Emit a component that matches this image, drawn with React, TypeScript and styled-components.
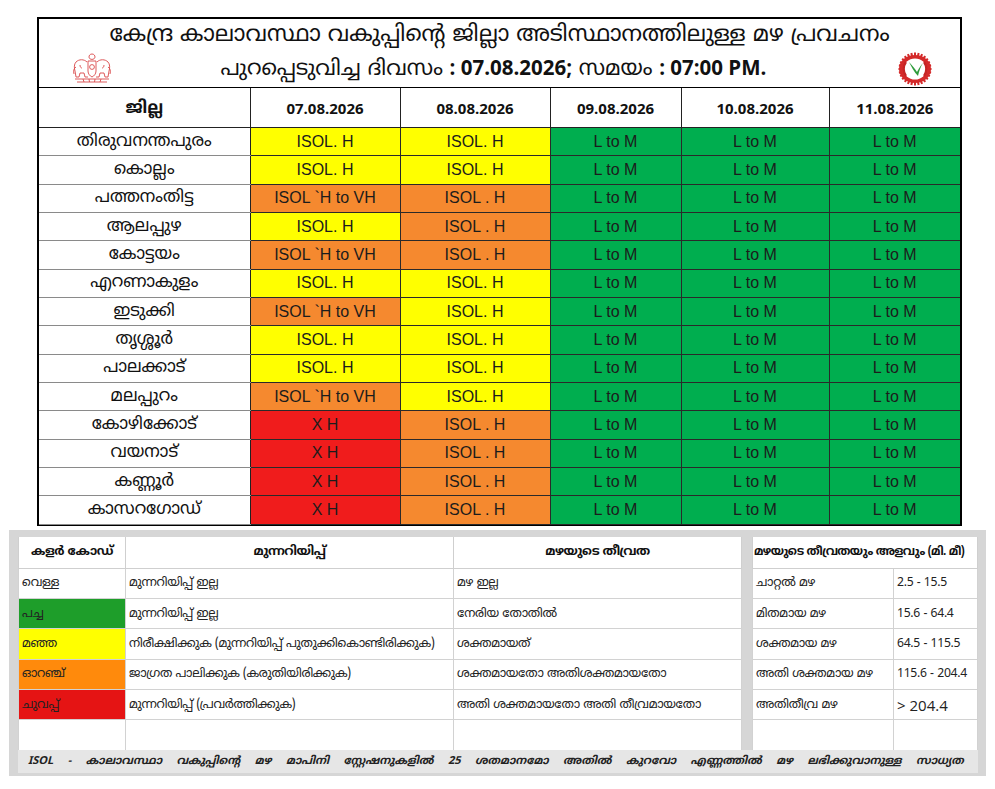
import React from "react";
import styled, { createGlobalStyle } from "styled-components";

const Global = createGlobalStyle`
  html, body { margin: 0; padding: 0; background: #fff; }
  body { font-family: "Noto Sans Malayalam", "Noto Sans", "Liberation Sans", sans-serif; color: #111; }
`;

const ML = `"Noto Sans Malayalam", "Noto Sans", "Liberation Sans", sans-serif`;

const Page = styled.div`
  width: 995px;
  padding-top: 17px;
`;

const Forecast = styled.div`
  margin-left: 37px;
  width: 925px;
  box-sizing: border-box;
  border: 2px solid #000;
  border-bottom-width: 1px;
`;

const TitleBox = styled.div`
  height: 69px;
  box-sizing: border-box;
  border-bottom: 1px solid #000;
  display: grid;
  grid-template-columns: 110px 1fr 110px;
  grid-template-rows: 33px 36px;
  grid-template-areas: "t t t" "l s r";
`;

const TitleLine = styled.div`
  grid-area: t;
  text-align: center;
  font-family: ${ML};
  font-size: 22.5px;
  line-height: 33px;
  padding-top: 1px;
  color: #111;
  white-space: nowrap;
`;

const SubLine = styled.div`
  grid-area: s;
  text-align: center;
  font-family: ${ML};
  font-size: 21.5px;
  line-height: 30px;
  color: #111;
  margin-left: -12px;
  white-space: nowrap;
  b { font-family: "Open Sans", "Liberation Sans", sans-serif; font-weight: 700; font-size: 20.5px; }
`;

const LogoSlot = styled.div<{ $side: "l" | "r" }>`
  grid-area: ${(p) => p.$side};
  display: flex;
  align-items: flex-start;
  justify-content: ${(p) => (p.$side === "l" ? "flex-start" : "flex-end")};
  padding: ${(p) => (p.$side === "l" ? "0 0 0 30px" : "0 24px 0 0")};
`;

const Table = styled.table`
  width: 100%;
  border-collapse: collapse;
  table-layout: fixed;
`;

const HeadCell = styled.th`
  height: 39px;
  padding: 0;
  border: 1px solid #222;
  border-top: none;
  font-family: "Open Sans", ${ML};
  font-weight: 700;
  font-size: 15px;
  color: #111;
  &:first-child { border-left: none; font-size: 17px; }
  &:last-child { border-right: none; }
`;

const colors: Record<string, string> = {
  Y: "#ffff00",
  O: "#f5892f",
  R: "#f01c1c",
  G: "#00ae4f",
};

const NameCell = styled.td`
  height: 28.35px;
  padding: 0;
  box-sizing: border-box;
  text-align: center;
  font-family: ${ML};
  font-size: 17px;
  line-height: 20px;
  border: 1px solid #8a8a8a;
  border-left: none;
  border-right-color: #222;
  background: #fff;
  white-space: nowrap;
`;

const ValueCell = styled.td<{ $c: string }>`
  height: 28.35px;
  padding: 0;
  box-sizing: border-box;
  text-align: center;
  font-family: "Liberation Sans", Arial, sans-serif;
  font-size: 16px;
  color: #1c1c1c;
  background: ${(p) => colors[p.$c]};
  border: 1px solid #2a2a2a;
  &:last-child { border-right: none; }
`;

const Legend = styled.div`
  margin: 4px 0 0 9px;
  width: 977px;
  height: 246px;
  box-sizing: border-box;
  background: #d6d6d6;
  padding: 7px 8px 3px 9px;
  display: grid;
  grid-template-columns: 724px 226px;
  grid-template-rows: 213px 23px;
  column-gap: 10px;
`;

const LegendTable = styled.table`
  width: 100%;
  border-collapse: collapse;
  table-layout: fixed;
  background: #fff;
`;

const LHead = styled.th<{ $align?: string }>`
  height: 31px;
  padding: 0 ${(p) => (p.$align ? "1px" : "3px")};
  font-family: ${ML};
  font-size: ${(p) => (p.$align ? "11.6px" : "12.5px")};
  letter-spacing: ${(p) => (p.$align ? "-0.6px" : "-0.5px")};
  font-weight: 700;
  text-align: ${(p) => p.$align || "center"};
  color: #111;
  border: 1px solid #cfcfcf;
  border-top: none;
  white-space: nowrap;
`;

const LCell = styled.td<{ $bg?: string; $big?: boolean }>`
  height: 30.3px;
  padding: 0 3px;
  box-sizing: border-box;
  font-family: ${(p) => (p.$big ? `"Open Sans", sans-serif` : ML)};
  font-size: ${(p) => (p.$big ? "15px" : "12.2px")};
  letter-spacing: ${(p) => (p.$big ? "0" : "-0.3px")};
  color: #222;
  background: ${(p) => p.$bg || "#fff"};
  border: 1px solid #d2d2d2;
  white-space: nowrap;
  overflow: hidden;
`;

const Footer = styled.div`
  grid-column: 1 / span 2;
  background: #e6e6e6;
  font-family: ${ML};
  font-style: italic;
  font-weight: 700;
  font-size: 11px;
  line-height: 23px;
  color: #222;
  padding-left: 10px;
  word-spacing: 11px;
  white-space: nowrap;
  overflow: hidden;
`;

const KeralaEmblem = () => (
  <svg width="46" height="32" viewBox="0 0 46 32" fill="none" stroke="#d9484a" strokeWidth="0.9">
    <path d="M23 2c-2 0-3 1.5-3 3s1.4 2.4 3 2.4 3-1 3-2.4-1-3-3-3z" />
    <path d="M19 9h8v10c0 3-2 5-4 6-2-1-4-3-4-6z" />
    <circle cx="23" cy="15" r="2.4" />
    <path d="M18 10c-3-3-8-3-11 0-2 2-2 6-1 9l1 6h3l1-4h4l1 4h3" />
    <path d="M7 15c-2 1-3 4-2 7M11 13c0 2 1 3 2 3" />
    <path d="M28 10c3-3 8-3 11 0 2 2 2 6 1 9l-1 6h-3l-1-4h-4l-1 4h-3" />
    <path d="M39 15c2 1 3 4 2 7M35 13c0 2-1 3-2 3" />
    <path d="M6 27h34M8 30h30" />
    <path d="M14 27l1 3M20 27l0.5 3M26 27l-0.5 3M32 27l-1 3" />
  </svg>
);

const ImdLogo = () => {
  const teeth = Array.from({ length: 28 }, (_, i) => (i * 360) / 28);
  return (
    <svg width="42" height="34" viewBox="0 0 42 34">
      {teeth.map((a) => (
        <rect key={a} x="20" y="0.5" width="2" height="4" fill="#d42a2a" transform={`rotate(${a} 21 17)`} />
      ))}
      <ellipse cx="21" cy="17" rx="16" ry="14" fill="#d42a2a" />
      <ellipse cx="21" cy="17" rx="11.5" ry="10.5" fill="#fff" />
      <path d="M12 10c-3 4-3 10 0 14" stroke="#c52525" strokeWidth="2.2" fill="none" />
      <path d="M30 10c3 4 3 10 0 14" stroke="#c52525" strokeWidth="2.2" fill="none" />
      <path d="M15 10c2 4 5 10 9 14 1-5 3-10 5-13-3 3-5 7-6 9-2-3-5-7-8-10z" fill="#2e9b3b" />
    </svg>
  );
};

type Row = { name: string; d1: [string, string]; d2: [string, string] };
const H: [string, string] = ["Y", "ISOL. H"];
const OVH: [string, string] = ["O", "ISOL `H to VH"];
const OH: [string, string] = ["O", "ISOL . H"];
const RX: [string, string] = ["R", "X H"];

const rows: Row[] = [
  { name: "തിരുവനന്തപുരം", d1: H, d2: H },
  { name: "കൊല്ലം", d1: H, d2: H },
  { name: "പത്തനംതിട്ട", d1: OVH, d2: OH },
  { name: "ആലപ്പുഴ", d1: H, d2: OH },
  { name: "കോട്ടയം", d1: OVH, d2: OH },
  { name: "എറണാകുളം", d1: H, d2: H },
  { name: "ഇടുക്കി", d1: OVH, d2: H },
  { name: "തൃശ്ശൂർ", d1: H, d2: H },
  { name: "പാലക്കാട്", d1: H, d2: H },
  { name: "മലപ്പുറം", d1: OVH, d2: H },
  { name: "കോഴിക്കോട്", d1: RX, d2: OH },
  { name: "വയനാട്", d1: RX, d2: OH },
  { name: "കണ്ണൂർ", d1: RX, d2: OH },
  { name: "കാസറഗോഡ്", d1: RX, d2: OH },
];

const dates = ["07.08.2026", "08.08.2026", "09.08.2026", "10.08.2026", "11.08.2026"];

const legendRows = [
  ["വെള്ള", "#ffffff", "മുന്നറിയിപ്പ് ഇല്ല", "മഴ ഇല്ല"],
  ["പച്ച", "#1e9e2a", "മുന്നറിയിപ്പ് ഇല്ല", "നേരിയ തോതിൽ"],
  ["മഞ്ഞ", "#ffff00", "നിരീക്ഷിക്കുക (മുന്നറിയിപ്പ് പുതുക്കികൊണ്ടിരിക്കുക)", "ശക്തമായത്"],
  ["ഓറഞ്ച്", "#ff8a0c", "ജാഗ്രത പാലിക്കുക (കരുതിയിരിക്കുക)", "ശക്തമായതോ അതിശക്തമായതോ"],
  ["ചുവപ്പ്", "#e51414", "മുന്നറിയിപ്പ് (പ്രവർത്തിക്കുക)", "അതി ശക്തമായതോ അതി തീവ്രമായതോ"],
  ["", "#ffffff", "", ""],
];

const amountRows: [string, string, boolean][] = [
  ["ചാറ്റൽ മഴ", "2.5 - 15.5", false],
  ["മിതമായ മഴ", "15.6 - 64.4", false],
  ["ശക്തമായ മഴ", "64.5 - 115.5", false],
  ["അതി ശക്തമായ മഴ", "115.6 - 204.4", false],
  ["അതിതീവ്ര മഴ", ">  204.4", true],
  ["", "", false],
];

export default function App() {
  return (
    <Page>
      <Global />
      <Forecast>
        <TitleBox>
          <TitleLine>കേന്ദ്ര കാലാവസ്ഥാ വകുപ്പിന്റെ ജില്ലാ അടിസ്ഥാനത്തിലുള്ള മഴ പ്രവചനം</TitleLine>
          <LogoSlot $side="l">
            <KeralaEmblem />
          </LogoSlot>
          <SubLine>
            പുറപ്പെടുവിച്ച ദിവസം <b>: 07.08.2026;</b> സമയം <b>: 07:00 PM.</b>
          </SubLine>
          <LogoSlot $side="r">
            <ImdLogo />
          </LogoSlot>
        </TitleBox>
        <Table>
          <colgroup>
            <col style={{ width: 211 }} />
            <col style={{ width: 150 }} />
            <col style={{ width: 150 }} />
            <col style={{ width: 131 }} />
            <col style={{ width: 148 }} />
            <col />
          </colgroup>
          <thead>
            <tr>
              <HeadCell>ജില്ല</HeadCell>
              {dates.map((d) => (
                <HeadCell key={d}>{d}</HeadCell>
              ))}
            </tr>
          </thead>
          <tbody>
            {rows.map((r) => (
              <tr key={r.name}>
                <NameCell>{r.name}</NameCell>
                <ValueCell $c={r.d1[0]}>{r.d1[1]}</ValueCell>
                <ValueCell $c={r.d2[0]}>{r.d2[1]}</ValueCell>
                <ValueCell $c="G">L to M</ValueCell>
                <ValueCell $c="G">L to M</ValueCell>
                <ValueCell $c="G">L to M</ValueCell>
              </tr>
            ))}
          </tbody>
        </Table>
      </Forecast>

      <Legend>
        <LegendTable>
          <colgroup>
            <col style={{ width: 107 }} />
            <col style={{ width: 328 }} />
            <col />
          </colgroup>
          <thead>
            <tr>
              <LHead>കളർ കോഡ്</LHead>
              <LHead>മുന്നറിയിപ്പ്</LHead>
              <LHead>മഴയുടെ തീവ്രത</LHead>
            </tr>
          </thead>
          <tbody>
            {legendRows.map((r, i) => (
              <tr key={i}>
                <LCell $bg={r[1]}>{r[0]}</LCell>
                <LCell>{r[2]}</LCell>
                <LCell>{r[3]}</LCell>
              </tr>
            ))}
          </tbody>
        </LegendTable>
        <LegendTable>
          <colgroup>
            <col style={{ width: 141 }} />
            <col />
          </colgroup>
          <thead>
            <tr>
              <LHead colSpan={2} $align="left">മഴയുടെ തീവ്രതയും അളവും (മി. മീ)</LHead>
            </tr>
          </thead>
          <tbody>
            {amountRows.map((r, i) => (
              <tr key={i}>
                <LCell>{r[0]}</LCell>
                <LCell $big={r[2]}>{r[1]}</LCell>
              </tr>
            ))}
          </tbody>
        </LegendTable>
        <Footer>
          ISOL - കാലാവസ്ഥാ വകുപ്പിന്റെ മഴ മാപിനി സ്റ്റേഷനുകളിൽ 25 ശതമാനമോ അതിൽ കുറവോ എണ്ണത്തിൽ മഴ ലഭിക്കുവാനുള്ള സാധ്യത
        </Footer>
      </Legend>
    </Page>
  );
}
